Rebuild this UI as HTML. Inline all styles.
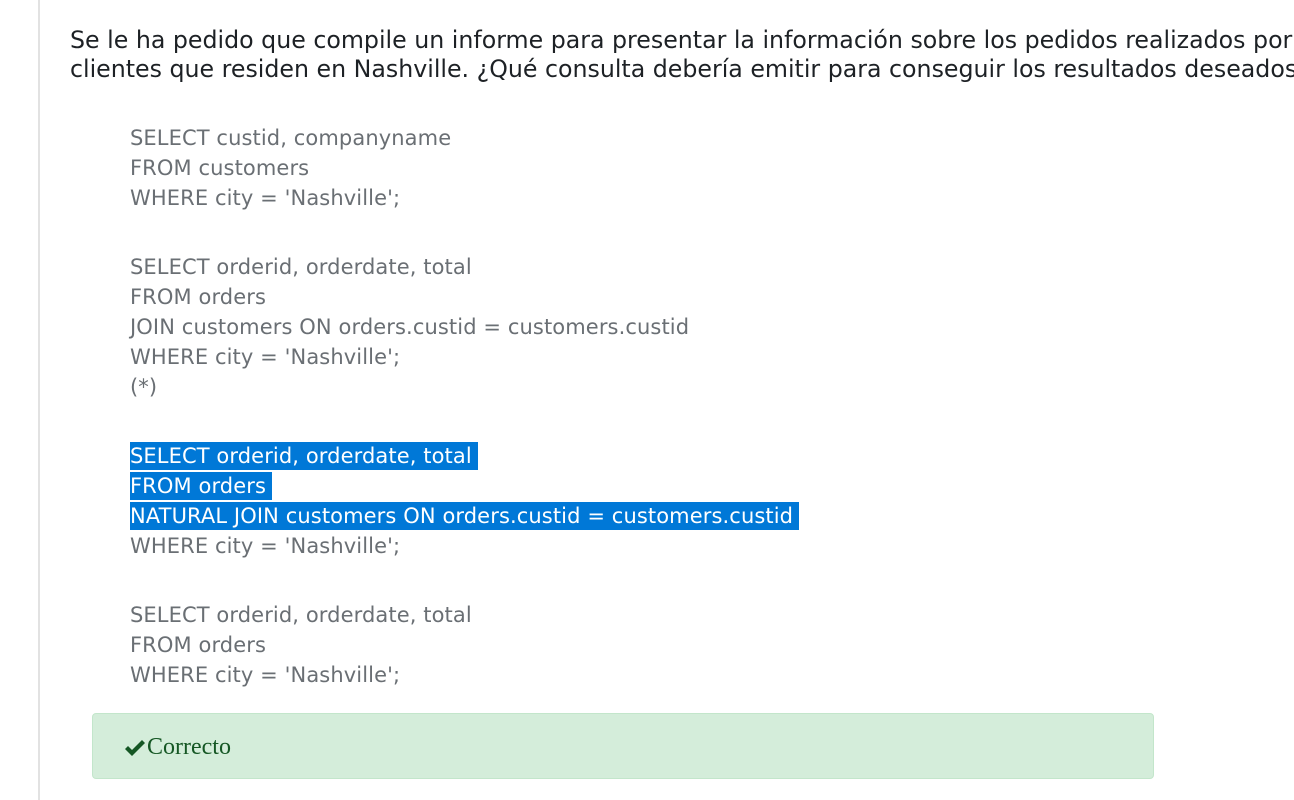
<!DOCTYPE html>
<html><head><meta charset="utf-8"><style>
html,body{margin:0;padding:0;background:#fff;width:1294px;height:800px;overflow:hidden;position:relative}
.vl{position:absolute;left:38px;top:0;width:2px;height:800px;background:#e2e2e2}
.q{position:absolute;left:70px;top:26px;font:23.7px/29px "DejaVu Sans","Liberation Sans",sans-serif;color:#1d2125;white-space:nowrap}
.c{position:absolute;left:130px;font:21px/30px "DejaVu Sans","Liberation Sans",sans-serif;color:#6a6f74;white-space:nowrap;letter-spacing:0.1px}
.c div{height:30px}
.h span{background:#0078d7;color:#fff;padding:2px 6px 2px 0}
.ok{position:absolute;left:92px;top:713px;width:1060px;height:64px;background:#d4edda;border:1px solid #c3e6cb;border-radius:4px}
.ok span{position:absolute;left:54px;top:21px;font:24px/24px "Liberation Serif",serif;color:#155724}
.ok svg{position:absolute;left:31px;top:26px}
</style></head><body>
<div class="vl"></div>
<div class="q">Se le ha pedido que compile un informe para presentar la información sobre los pedidos realizados por<br>clientes que residen en Nashville. ¿Qué consulta debería emitir para conseguir los resultados deseados?</div>
<div class="c" style="top:123px"><div>SELECT custid, companyname</div><div>FROM customers</div><div>WHERE city = 'Nashville';</div></div>
<div class="c" style="top:252px"><div>SELECT orderid, orderdate, total</div><div>FROM orders</div><div>JOIN customers ON orders.custid = customers.custid</div><div>WHERE city = 'Nashville';</div><div>(*)</div></div>
<div class="c h" style="top:441px"><div><span>SELECT orderid, orderdate, total </span></div><div><span>FROM orders </span></div><div><span>NATURAL JOIN customers ON orders.custid = customers.custid </span></div><div>WHERE city = 'Nashville';</div></div>
<div class="c" style="top:600px"><div>SELECT orderid, orderdate, total</div><div>FROM orders</div><div>WHERE city = 'Nashville';</div></div>
<div class="ok"><svg width="22" height="18" viewBox="0 0 22 18"><path d="M1 9 L4 6 L8 10 L18 0 L21 3 L8 16 Z" fill="#155724"/></svg><span>Correcto</span></div>
</body></html>
